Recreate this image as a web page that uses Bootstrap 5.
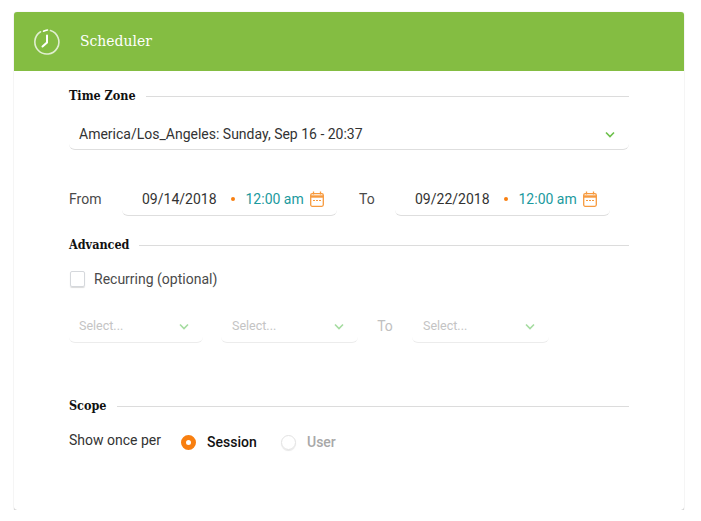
<!DOCTYPE html>
<html lang="en">
<head>
    <meta charset="UTF-8">
    <meta name="viewport" content="width=device-width, initial-scale=1.0">
    <title>Scheduler</title>
    <link href="https://cdn.jsdelivr.net/npm/bootstrap@5.3.0/dist/css/bootstrap.min.css" rel="stylesheet">
    <style>
        body {
            background-color: #fff;
            font-family: Roboto, "Liberation Sans", sans-serif;
            font-size: 14px;
            color: #4a4a4a;
        }
        svg {
            flex-shrink: 0;
        }
        .sched-wrap {
            padding: 12px 17px 0 14px;
        }
        .sched-card {
            border: 0;
            border-radius: 3px;
            height: 498px;
            box-shadow: 0 1px 1px rgba(0, 0, 0, .22), 0 0 1px rgba(0, 0, 0, .22);
        }
        .sched-head {
            height: 59px;
            background-color: #84bd42;
            border-radius: 3px 3px 0 0;
            padding-left: 19px;
            color: #fff;
            font-family: "DejaVu Serif", serif;
            font-stretch: condensed;
            font-size: 15.5px;
        }
        .sched-head svg {
            margin-right: 19px;
        }
        .sched-body {
            padding: 0 55px;
        }
        .sec-title {
            height: 20px;
            font-family: "DejaVu Serif", serif;
            font-stretch: condensed;
            font-weight: 700;
            font-size: 12.5px;
            color: #111;
        }
        .sec-title::after {
            content: "";
            flex: 1;
            height: 1px;
            margin-left: 10px;
            background-color: #dcdcdc;
        }
        .line-box {
            border-radius: 6px;
            border-bottom: 1px solid #dedede;
            background-color: #fff;
        }
        .tz-select {
            height: 31px;
            padding: 0 14px 0 10px;
            color: #333;
        }
        .date-box {
            width: 215px;
            height: 33px;
            padding: 0 0 0 20px;
            color: #333;
            white-space: nowrap;
        }
        .dot-sep {
            flex-shrink: 0;
            width: 4px;
            height: 4px;
            border-radius: 50%;
            background-color: #f87f10;
            margin: 0 11px 0 14px;
        }
        .time-txt {
            color: #1b9a9e;
            margin-right: 6px;
        }
        .check-box {
            width: 15px;
            height: 16px;
            margin: 0 9px 0 1px;
            border: 1px solid #d5d8dc;
            border-radius: 2px;
            box-shadow: 0 1px 1px rgba(0, 0, 0, .15);
        }
        .muted-select {
            height: 33px;
            padding: 0 14px 0 11px;
            color: #c4c4c4;
            font-size: 12.5px;
            border-bottom-color: #ececec;
        }
        .muted-to {
            width: 54px;
            text-align: center;
            color: #c0c0c0;
        }
        .radio-on {
            width: 15px;
            height: 15px;
            border-radius: 50%;
            border: 5px solid #f87f10;
            background-color: #fff;
            margin-right: 11px;
        }
        .radio-off {
            width: 15px;
            height: 15px;
            border-radius: 50%;
            border: 1px solid #e2e2e2;
            box-shadow: 0 1px 1px rgba(0, 0, 0, .1);
            margin-right: 11px;
        }
    </style>
</head>
<body>
    <div class="sched-wrap">
        <div class="card sched-card">
            <div class="sched-head d-flex align-items-center">
                <svg width="28" height="28" viewBox="0 0 28 28" fill="none" stroke="#fff" stroke-linecap="round">
                    <path d="M17.500 2.600A12 12 0 1 1 7.600 3.800" stroke-width="1.600" opacity=".75"/>
                    <path d="M10.500 3.200A12 12 0 0 1 14.500 2" stroke-width="1.600"/>
                    <path d="M14 7.500V14.500L9.500 18.500" stroke-width="2"/>
                </svg>
                <span>Scheduler</span>
            </div>
            <div class="sched-body">
                <div class="sec-title d-flex align-items-center" style="margin-top: 15px">Time Zone</div>
                <div class="line-box tz-select d-flex align-items-center justify-content-between" style="margin-top: 13px">
                    <span>America/Los_Angeles: Sunday, Sep 16 - 20:37</span>
                    <svg width="10" height="7" viewBox="0 0 10 7" fill="none" stroke="#6cc04a" stroke-width="1.600"><path d="M1 1.500l4 4 4-4"/></svg>
                </div>
                <div class="d-flex align-items-center" style="margin-top: 33px">
                    <span style="width: 53px">From</span>
                    <div class="line-box date-box d-flex align-items-center">
                        <span>09/14/2018</span><span class="dot-sep"></span><span class="time-txt">12:00 am</span>
                        <svg width="14" height="16" viewBox="0 0 14 16" fill="none" stroke="#f79a3e" stroke-width="1.300"><rect x=".7" y="2.700" width="12.600" height="12.600" rx="1.500"/><path d="M.7 5.500h12.600" stroke-width="2.400"/><path d="M3.500 .5v3M10.500 .5v3"/><path d="M3 9.500h2M6 9.500h2M9 9.500h2" stroke-width="1.200"/></svg>
                    </div>
                    <span style="width: 58px; padding-left: 22px">To</span>
                    <div class="line-box date-box d-flex align-items-center">
                        <span>09/22/2018</span><span class="dot-sep"></span><span class="time-txt">12:00 am</span>
                        <svg width="14" height="16" viewBox="0 0 14 16" fill="none" stroke="#f79a3e" stroke-width="1.300"><rect x=".7" y="2.700" width="12.600" height="12.600" rx="1.500"/><path d="M.7 5.500h12.600" stroke-width="2.400"/><path d="M3.500 .5v3M10.500 .5v3"/><path d="M3 9.500h2M6 9.500h2M9 9.500h2" stroke-width="1.200"/></svg>
                    </div>
                </div>
                <div class="sec-title d-flex align-items-center" style="margin-top: 19px">Advanced</div>
                <div class="d-flex align-items-center" style="margin-top: 14px; height: 20px">
                    <span class="check-box"></span><span>Recurring (optional)</span>
                </div>
                <div class="d-flex align-items-center" style="margin-top: 21px">
                    <div class="line-box muted-select d-flex align-items-center justify-content-between" style="width: 134px; padding-left: 10px">
                        <span>Select...</span>
                        <svg width="10" height="7" viewBox="0 0 10 7" fill="none" stroke="#a5dca0" stroke-width="1.600"><path d="M1 1.500l4 4 4-4"/></svg>
                    </div>
                    <div class="line-box muted-select d-flex align-items-center justify-content-between" style="width: 137px; margin-left: 18px">
                        <span>Select...</span>
                        <svg width="10" height="7" viewBox="0 0 10 7" fill="none" stroke="#a5dca0" stroke-width="1.600"><path d="M1 1.500l4 4 4-4"/></svg>
                    </div>
                    <span class="muted-to">To</span>
                    <div class="line-box muted-select d-flex align-items-center justify-content-between" style="width: 137px">
                        <span>Select...</span>
                        <svg width="10" height="7" viewBox="0 0 10 7" fill="none" stroke="#a5dca0" stroke-width="1.600"><path d="M1 1.500l4 4 4-4"/></svg>
                    </div>
                </div>
                <div class="sec-title d-flex align-items-center" style="margin-top: 53px">Scope</div>
                <div class="d-flex align-items-center" style="margin-top: 15px; height: 22px">
                    <span style="width: 112px; color: #333; padding-bottom: 3px">Show once per</span>
                    <span class="radio-on"></span><span class="fw-medium" style="width: 74px; color: #111">Session</span>
                    <span class="radio-off"></span><span class="fw-medium" style="color: #a8a8a8">User</span>
                </div>
            </div>
        </div>
    </div>
</body>
</html>
